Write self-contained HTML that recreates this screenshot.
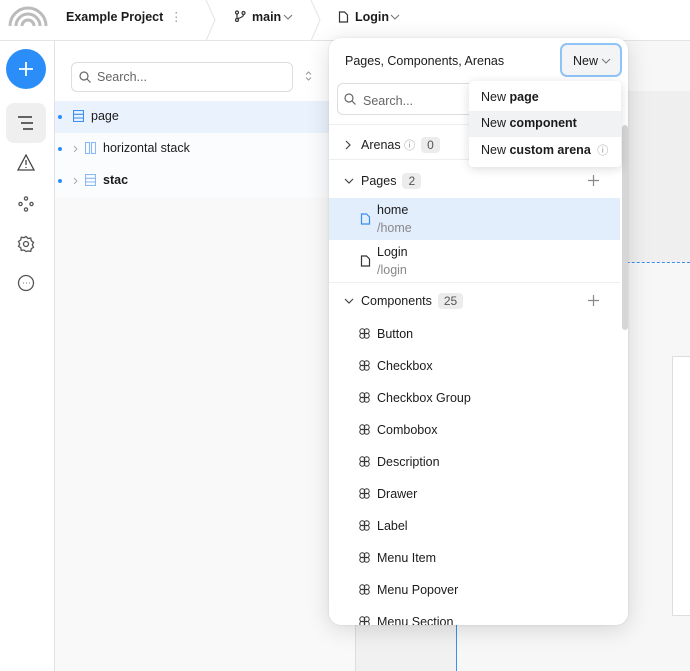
<!DOCTYPE html>
<html><head><style>
*{box-sizing:border-box;margin:0;padding:0}
body{width:690px;height:671px;overflow:hidden;font-family:"Liberation Sans",sans-serif;font-size:12.5px;color:#1b1b1b;background:#fff;position:relative}
.abs{position:absolute}
.top{left:0;top:0;width:690px;height:41px;border-bottom:1px solid #e4e4e4;background:#fff}
.rail{left:0;top:41px;width:55px;height:630px;border-right:1px solid #e2e2e2;background:#fff}
.tree{left:55px;top:41px;width:300px;height:630px;background:#f9f9f9}
.canvas{left:355px;top:41px;width:335px;height:630px;background:#f7f7f7}
.pop{left:329px;top:38px;width:299px;height:587px;background:#fff;border-radius:12px;box-shadow:0 4px 24px rgba(0,0,0,.14),0 0 2px rgba(0,0,0,.1);overflow:hidden}
.row{position:absolute;left:0;width:291px}
.badge{display:inline-block;background:#ececec;border-radius:4px;padding:1px 6px;color:#555;font-size:12px;margin-left:6px}
.ci{position:absolute;left:30px}
.cl{position:absolute;left:48px}
.menu{left:469px;top:81px;width:152px;height:86px;background:#fff;border-radius:4px;box-shadow:0 2px 10px rgba(0,0,0,.14)}
</style></head><body>
<div class="abs top">
<svg class="abs" style="left:8px;top:4px" width="40" height="22" viewBox="0 0 40 22" fill="none" stroke="#bbb" stroke-width="3"><path d="M2 22A18 18 0 0 1 38 22"/><path d="M8 22A12 12 0 0 1 32 22"/><path d="M14 22A6 6 0 0 1 26 22"/></svg>
<div class="abs" style="left:66px;top:10px;font-weight:bold;font-size:12.5px">Example Project</div>
<div class="abs" style="left:170px;top:9px;color:#999">⋮</div>
<svg class="abs" style="left:205px;top:0" width="12" height="41"><path d="M1 0L10 20L1 41" stroke="#e4e4e4" fill="none"/></svg>
<svg class="abs" style="left:234px;top:10px" width="12" height="12" fill="none" stroke="#333" stroke-width="1.2"><circle cx="3" cy="2.5" r="1.5"/><circle cx="3" cy="10" r="1.5"/><circle cx="9.5" cy="3" r="1.5"/><path d="M3 4v4.5M9.5 4.5Q9.5 7 4 8.5"/></svg>
<div class="abs" style="left:252px;top:10px;font-weight:bold">main</div>
<svg class="abs" style="left:283px;top:14px" width="10" height="6" fill="none" stroke="#777" stroke-width="1.1"><path d="M1 1l4 4 4-4"/></svg>
<svg class="abs" style="left:310px;top:0" width="12" height="41"><path d="M1 0L10 20L1 41" stroke="#e4e4e4" fill="none"/></svg>
<svg class="abs" style="left:338px;top:11px" width="11" height="12" fill="none" stroke="#333" stroke-width="1.2"><path d="M1.5 1h5l3 3v7h-8z"/></svg>
<div class="abs" style="left:355px;top:10px;font-weight:bold">Login</div>
<svg class="abs" style="left:390px;top:14px" width="10" height="6" fill="none" stroke="#777" stroke-width="1.1"><path d="M1 1l4 4 4-4"/></svg>
</div>
<div class="abs rail">
<div class="abs" style="left:6px;top:8px;width:40px;height:40px;border-radius:50%;background:#2b8ef8"></div>
<svg class="abs" style="left:18px;top:20px" width="16" height="16" stroke="#fff" stroke-width="1.8"><path d="M8 1v14M1 8h14"/></svg>
<div class="abs" style="left:6px;top:62px;width:40px;height:40px;border-radius:8px;background:#efefef"></div>
<svg class="abs" style="left:17px;top:74px" width="18" height="16" stroke="#333" stroke-width="1.5"><path d="M1 2h14M4 8h12M6 14h10"/></svg>
<svg class="abs" style="left:17px;top:113px" width="18" height="17" fill="none" stroke="#444" stroke-width="1.3"><path d="M9 1L17 16H1z"/><path d="M9 6v5M9 13v1"/></svg>
<svg class="abs" style="left:18px;top:155px" width="16" height="16" fill="none" stroke="#555" stroke-width="1.3"><circle cx="8" cy="2.5" r="1.6"/><circle cx="2.5" cy="8" r="1.6"/><circle cx="13.5" cy="8" r="1.6"/><circle cx="8" cy="13.5" r="1.6"/></svg>
<svg class="abs" style="left:17px;top:194px" width="18" height="18" fill="none" stroke="#555" stroke-width="1.3"><circle cx="9" cy="9" r="2.5"/><path d="M9 1.5l2 2 2.7-.5.6 2.7 2.2 1.6-1.2 2.5 1.2 2.5-2.2 1.4-.6 2.7-2.7-.4L9 16.5l-2-1.5-2.7.4-.6-2.7L1.5 11.3 2.7 9 1.5 6.5l2.2-1.6.6-2.7 2.7.5z"/></svg>
<svg class="abs" style="left:17px;top:233px" width="18" height="18" fill="none" stroke="#555" stroke-width="1.3"><circle cx="9" cy="9" r="7.5"/><path d="M6 9h.5M9 9h.5M12 9h.5" stroke-width="1.6"/></svg>
</div>
<div class="abs tree">
<div class="abs" style="left:0;top:0;width:300px;height:60px;background:#fff"></div>
<div class="abs" style="left:16px;top:21px;width:222px;height:30px;border:1px solid #ddd;border-radius:6px;background:#fff"></div>
<svg class="abs" style="left:24px;top:30px" width="12" height="12" fill="none" stroke="#666" stroke-width="1.2"><circle cx="5" cy="5" r="4"/><path d="M8 8l3.5 3.5"/></svg>
<div class="abs" style="left:42px;top:29px;color:#666">Search...</div>
<svg class="abs" style="left:250px;top:30px" width="7" height="10" fill="none" stroke="#999" stroke-width="1"><path d="M1 3.5l2.5-2.5 2.5 2.5M1 6.5l2.5 2.5 2.5-2.5"/></svg>
<div class="abs" style="left:0;top:60px;width:300px;height:32px;background:#e9f2fd"></div>
<div class="abs" style="left:0;top:92px;width:300px;height:64px;background:#fbfcfe"></div>
<div class="abs" style="left:3px;top:74px;width:4px;height:4px;border-radius:50%;background:#2b8ef8"></div>
<div class="abs" style="left:3px;top:106px;width:4px;height:4px;border-radius:50%;background:#2b8ef8"></div>
<div class="abs" style="left:3px;top:138px;width:4px;height:4px;border-radius:50%;background:#2b8ef8"></div>
<svg class="abs" style="left:18px;top:69px" width="11" height="12" fill="none" stroke="#3a8ff0" stroke-width="1.1"><rect x=".5" y=".5" width="10" height="11"/><path d="M.5 4.3h10M.5 8h10"/></svg>
<div class="abs" style="left:36px;top:68px">page</div>
<svg class="abs" style="left:18px;top:104px" width="5" height="8" fill="none" stroke="#aaa"><path d="M1 1l3 3-3 3"/></svg>
<svg class="abs" style="left:30px;top:101px" width="11" height="12" fill="none" stroke="#8ab8f2" stroke-width="1.1"><rect x=".5" y=".5" width="4" height="11"/><rect x="6.5" y=".5" width="4" height="11"/></svg>
<div class="abs" style="left:48px;top:100px">horizontal stack</div>
<svg class="abs" style="left:18px;top:136px" width="5" height="8" fill="none" stroke="#aaa"><path d="M1 1l3 3-3 3"/></svg>
<svg class="abs" style="left:30px;top:133px" width="11" height="12" fill="none" stroke="#8ab8f2" stroke-width="1.1"><rect x=".5" y=".5" width="10" height="11"/><path d="M.5 4.3h10M.5 8h10"/></svg>
<div class="abs" style="left:48px;top:132px;font-weight:bold">stac</div>
</div>
<div class="abs canvas">
<div class="abs" style="left:0;top:50px;width:335px;height:171px;background:#efefef"></div>
<div class="abs" style="left:0;top:221px;width:335px;border-top:1px dashed #3a8ff0"></div>
<div class="abs" style="left:317px;top:315px;width:20px;height:260px;border:1px solid #ddd;background:#fff"></div>
<div class="abs" style="left:0;top:560px;width:102px;height:70px;background:#f1f1f1;border-left:1px solid #ddd;border-right:1px solid #3a8ff0"></div>
</div>
<div class="abs pop">
<div class="abs" style="left:16px;top:16px">Pages, Components, Arenas</div>
<div class="abs" style="left:231px;top:5px;width:62px;height:34px;border:2px solid #8fc2f7;border-radius:7px;background:#f3f4f5;padding:9px 0 0 11px">New</div>
<svg class="abs" style="left:272px;top:20px" width="10" height="6" fill="none" stroke="#777" stroke-width="1.1"><path d="M1 1l4 4 4-4"/></svg>
<div class="abs" style="left:8px;top:45px;width:150px;height:32px;border:1px solid #ddd;border-radius:6px"></div>
<svg class="abs" style="left:15px;top:55px" width="12" height="12" fill="none" stroke="#666" stroke-width="1.2"><circle cx="5" cy="5" r="4"/><path d="M8 8l3.5 3.5"/></svg>
<div class="abs" style="left:34px;top:56px;color:#666">Search...</div>
<div class="row" style="top:86px;border-top:1px solid #eee;height:36px;border-bottom:1px solid #eee"></div>
<svg class="abs" style="left:16px;top:102px" width="6" height="10" fill="none" stroke="#444" stroke-width="1.2"><path d="M1 1l4 4-4 4"/></svg>
<div class="abs" style="left:32px;top:99px">Arenas <span style="color:#999;font-size:11px">ⓘ</span><span class="badge">0</span></div>
<svg class="abs" style="left:15px;top:140px" width="10" height="6" fill="none" stroke="#444" stroke-width="1.2"><path d="M1 1l4 4 4-4"/></svg>
<div class="abs" style="left:32px;top:135px">Pages<span class="badge">2</span></div>
<svg class="abs" style="left:259px;top:137px" width="11" height="11" stroke="#888" stroke-width="1.2"><path d="M5.5 0v11M0 5.5h11"/></svg>
<div class="row" style="top:160px;height:42px;background:#e2eefc"></div>
<svg class="abs" style="left:31px;top:175px" width="11" height="12" fill="none" stroke="#3a8ff0" stroke-width="1.2"><path d="M1.5 1h5l3 3v7h-8z"/></svg>
<div class="abs" style="left:48px;top:165px">home</div>
<div class="abs" style="left:48px;top:183px;color:#888">/home</div>
<svg class="abs" style="left:31px;top:217px" width="11" height="12" fill="none" stroke="#333" stroke-width="1.2"><path d="M1.5 1h5l3 3v7h-8z"/></svg>
<div class="abs" style="left:48px;top:207px">Login</div>
<div class="abs" style="left:48px;top:225px;color:#888">/login</div>
<div class="row" style="top:244px;border-top:1px solid #eee"></div>
<svg class="abs" style="left:15px;top:260px" width="10" height="6" fill="none" stroke="#444" stroke-width="1.2"><path d="M1 1l4 4 4-4"/></svg>
<div class="abs" style="left:32px;top:255px">Components<span class="badge">25</span></div>
<svg class="abs" style="left:259px;top:257px" width="11" height="11" stroke="#888" stroke-width="1.2"><path d="M5.5 0v11M0 5.5h11"/></svg>
<div class="abs" style="left:293px;top:87px;width:6px;height:205px;background:#d6d6d6;border-radius:3px"></div>
<div id="comps"></div>
</div>
<div class="abs menu">
<div class="abs" style="left:12px;top:9px">New <b>page</b></div>
<div class="abs" style="left:0;top:30px;width:152px;height:26px;background:#f0f2f4"></div>
<div class="abs" style="left:12px;top:35px">New <b>component</b></div>
<div class="abs" style="left:12px;top:61px">New <b>custom arena</b> <span style="color:#999;font-size:11px">&nbsp;ⓘ</span></div>
</div>
<script>
var n=["Button","Checkbox","Checkbox Group","Combobox","Description","Drawer","Label","Menu Item","Menu Popover","Menu Section"],h="";
n.forEach(function(t,i){var y=289+i*32;h+='<svg class="ci" style="top:'+(y+1)+'px" width="11" height="11" fill="none" stroke="#333" stroke-width="1"><circle cx="3.3" cy="3.3" r="2.5"/><circle cx="7.7" cy="3.3" r="2.5"/><circle cx="3.3" cy="7.7" r="2.5"/><circle cx="7.7" cy="7.7" r="2.5"/></svg><div class="cl" style="top:'+y+'px">'+t+'</div>';});
document.getElementById("comps").outerHTML=h;
</script>
</body></html>
